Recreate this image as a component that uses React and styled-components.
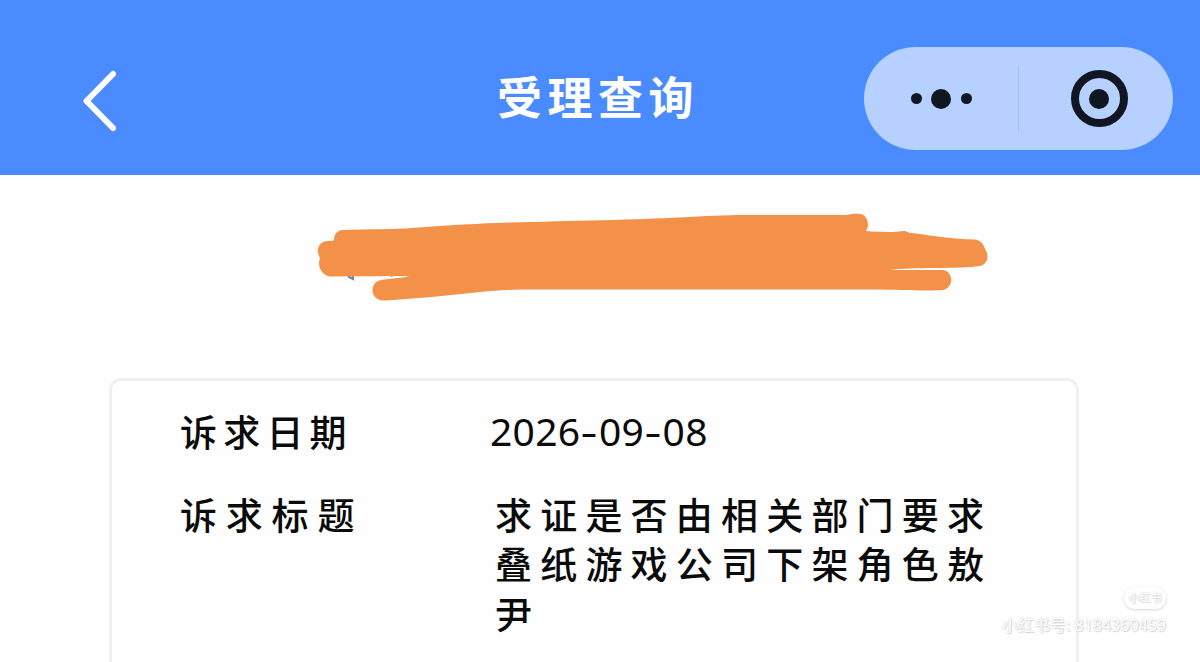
import styled, { createGlobalStyle } from "styled-components";

const records = [
    { label: "诉求日期", value: "2026-09-08", type: "date", labelGap: 6.2 },
    { label: "诉求标题", value: "求证是否由相关部门要求叠纸游戏公司下架角色敖尹", labelGap: 8.8 },
];

export default function App() {
    return (
        <CsPage>
            <GlobalStyle />
            <CsHeader>
                <CsBack aria-label="back">
                    <svg width="36" height="62" viewBox="0 0 36 62" fill="none">
                        <path d="M32 4L5.5 31L32 58" stroke="#fff" strokeWidth="6" strokeLinecap="round" strokeLinejoin="round" />
                    </svg>
                </CsBack>
                <CsTitle>受理查询</CsTitle>
                <CsCapsule>
                    <CsCapsuleItem shift={3}>
                        <CsDot size={11} />
                        <CsDot size={20} />
                        <CsDot size={11} />
                    </CsCapsuleItem>
                    <CsDivider />
                    <CsCapsuleItem shift={6}>
                        <CsTarget><CsDot size={20} /></CsTarget>
                    </CsCapsuleItem>
                </CsCapsule>
            </CsHeader>

            <CsBanner>
                <Scribble />
            </CsBanner>

            <CsCard>
                {records.map(record => (
                    <CsRow key={record.label}>
                        <CsLabel gap={record.labelGap}>{record.label}</CsLabel>
                        {record.type === "date" ? <DateValue value={record.value} /> : <CsValue>{record.value}</CsValue>}
                    </CsRow>
                ))}
            </CsCard>

            <CsWatermark>
                <span className="badge">小红书</span>
                <span className="account">小红书号: 8184360459</span>
            </CsWatermark>
        </CsPage>
    );
}

function DateValue({ value }) {
    return (
        <CsDate>
            {value.split("").map((char, i) => char === "-" ? <i key={i}>{char}</i> : char)}
        </CsDate>
    );
}

function Scribble() {
    return (
        <svg width="690" height="100" viewBox="310 205 690 100">
            <path d="M348 273l1 4l4 2v-5M391 272l1 4.5" stroke="#6287b5" strokeWidth="2.2" fill="none" />
            <path
                fill="#f39149"
                d="M342 230C370 229 395 229.5 412 228C450 225 480 223.5 510 222.5C570 221 640 219.5 680 217.5C705 216 725 215 745 215H846C852 214 857 213.5 861 214C868 216 870 226 866 231C880 232 894 232.5 903 231C907 231 908 233 912 233C934 236 952 239 975 239.5C981 240 984 245 985 249C990 257 987 264 980 266C960 269 910 267 890 270H943C954 272 954 287 943 290C930 291 905 290 870 289.5H520C500 290 480 292 461 294C435 297 408 299 384 300.5C371 301 369 285 378 281C386 278 400 279 409 276L329 276.5C321 274 317 266 320 258C315 250 319 241 328 241C331 241 333 241 334 240C334 234 337 231 342 230Z"
            />
        </svg>
    );
}

const GlobalStyle = createGlobalStyle`
    * {
        box-sizing: border-box;
    }
    body {
        margin: 0;
        background-color: #fefefe;
        font-family: "Noto Sans", "Noto Sans CJK SC", sans-serif;
    }
`;

const CsPage = styled.div`
    position: relative;
    width: 100%;
    height: 662px;
    overflow: hidden;
    display: flex;
    flex-direction: column;
`;

const CsHeader = styled.header`
    height: 175px;
    flex-shrink: 0;
    padding: 22px 27px 0 81px;
    background-color: #4a8bff;
    display: grid;
    grid-template-columns: 1fr auto 1fr;
    align-items: center;
`;

const CsBack = styled.button`
    width: 36px;
    height: 62px;
    margin-top: 5px;
    padding: 0;
    border: none;
    background: none;
    display: flex;
`;

const CsTitle = styled.h1`
    margin: 0 0 6px -58px;
    color: #fff;
    font-family: "Noto Sans CJK SC", sans-serif;
    font-size: 45px;
    font-weight: 700;
    line-height: 50px;
    letter-spacing: 5.5px;
`;

const CsCapsule = styled.div`
    justify-self: end;
    width: 309px;
    height: 103px;
    border-radius: 52px;
    background-color: #b6d0ff;
    display: flex;
    align-items: center;
`;

const CsCapsuleItem = styled.div`
    flex: 1;
    display: flex;
    align-items: center;
    justify-content: center;
    gap: 9.5px;
    padding-left: ${({ shift }) => shift || 0}px;
`;

const CsDivider = styled.div`
    width: 1px;
    height: 64px;
    margin-left: 3px;
    background-color: #a3bdec;
`;

const CsDot = styled.span`
    width: ${({ size }) => size}px;
    height: ${({ size }) => size}px;
    border-radius: 50%;
    background-color: #101622;
`;

const CsTarget = styled.div`
    width: 57px;
    height: 57px;
    border: 8px solid #101622;
    border-radius: 50%;
    display: flex;
    align-items: center;
    justify-content: center;
`;

const CsBanner = styled.div`
    height: 203px;
    flex-shrink: 0;
    padding: 30px 0 0 310px;
`;

const CsCard = styled.section`
    width: 970px;
    height: 320px;
    flex-shrink: 0;
    margin-left: 109px;
    padding: 26px 68px 0;
    border: 3px solid #f0f0f0;
    border-radius: 12px;
    display: flex;
    flex-direction: column;
    gap: 33px;
`;

const CsRow = styled.div`
    display: flex;
    align-items: flex-start;
    color: #0b0b0b;
    line-height: 49.5px;
`;

const CsLabel = styled.div`
    width: 315px;
    flex-shrink: 0;
    font-family: "Noto Sans CJK SC", sans-serif;
    font-size: 37px;
    font-weight: 500;
    letter-spacing: ${({ gap }) => gap}px;
`;

const CsValue = styled.div`
    width: 505px;
    flex-shrink: 0;
    font-family: "Noto Sans CJK SC", sans-serif;
    font-size: 37px;
    font-weight: 500;
    letter-spacing: 8.2px;
`;

const CsDate = styled.div`
    margin: -1px 0 1px -5px;
    font-family: "Noto Sans", sans-serif;
    font-size: 39px;
    letter-spacing: 0.3px;

    i{
        display: inline-block;
        font-style: normal;
        padding: 0 2.8px;
        transform: scaleX(1.35);
    }
`;

const CsWatermark = styled.div`
    position: absolute;
    right: 34px;
    bottom: 24px;
    display: flex;
    flex-direction: column;
    align-items: flex-end;
    gap: 3px;
    color: #fff;
    text-shadow: 0 0 2px #c4c4c4, 1px 1px 1px #dcdcdc;

    .badge{
        width: 42px;
        height: 22px;
        border-radius: 11px;
        background-color: #fff;
        box-shadow: 0 1px 3px #d8d8d8;
        font-size: 11px;
        line-height: 21px;
        text-align: center;
    }
    .account{
        font-size: 16px;
        line-height: 26px;
        white-space: nowrap;
    }
`;
